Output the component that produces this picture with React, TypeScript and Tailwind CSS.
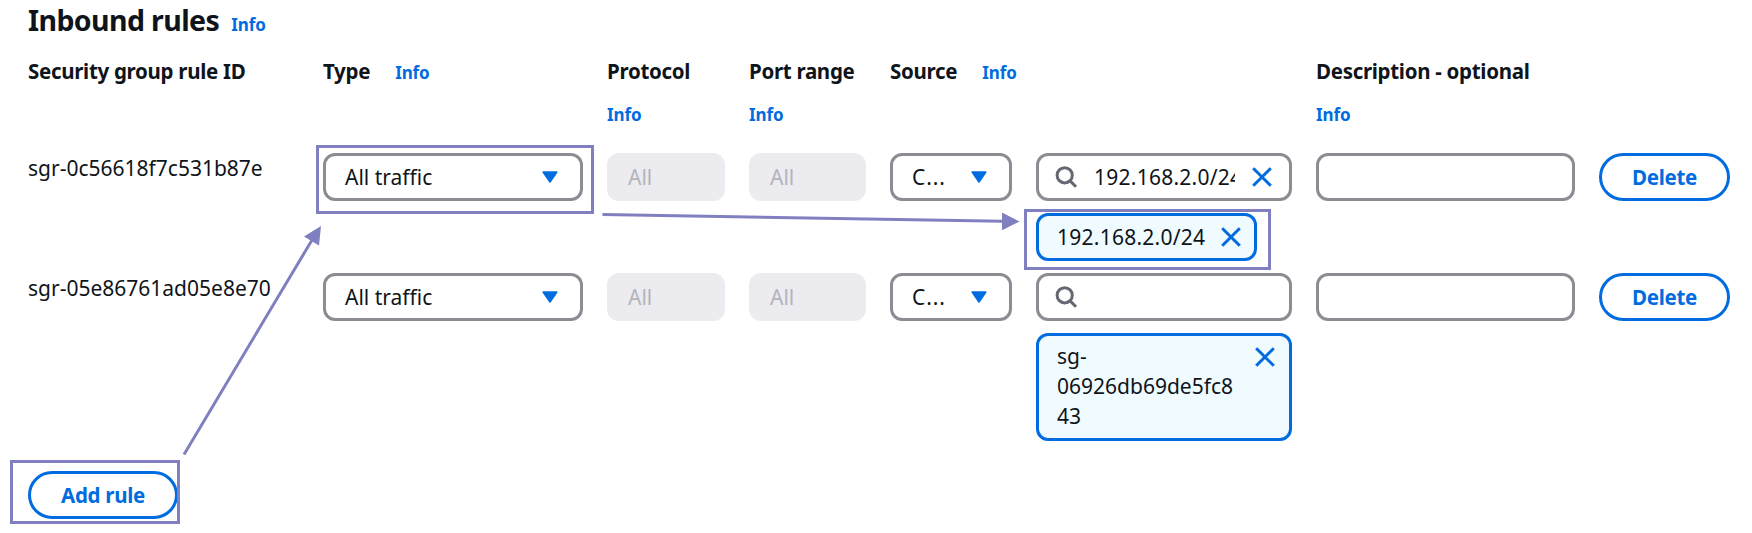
import type { ReactNode } from 'react';

const GRID =
  'grid grid-cols-[271px_260px_118px_117px_122px_256px_259px_131px] gap-x-6';

function Info({ className = '' }: { className?: string }) {
  return (
    <a className={`text-[17px] leading-[24px] font-bold tracking-[-0.1px] text-[#006ce0] ${className}`}>
      Info
    </a>
  );
}

function Caret() {
  return (
    <svg className="h-3 w-4 shrink-0" viewBox="0 0 16 12">
      <path d="M1.5 1.2h13L8 10.8z" fill="#006ce0" stroke="#006ce0" strokeWidth="2" strokeLinejoin="round" />
    </svg>
  );
}

function Close() {
  return (
    <svg className="h-5 w-5 shrink-0" viewBox="0 0 20 20">
      <path d="M1.2 1.2l17.6 17.6M18.8 1.2L1.2 18.8" stroke="#006ce0" strokeWidth="3" fill="none" />
    </svg>
  );
}

function Search() {
  return (
    <svg className="h-6 w-6 shrink-0" viewBox="0 0 24 24" fill="none" stroke="#656871" strokeWidth="3">
      <circle cx="10.7" cy="10.3" r="7.6" />
      <path d="M15.8 15.6l6.2 6.2" />
    </svg>
  );
}

function Select({ children, className = '' }: { children: ReactNode; className?: string }) {
  return (
    <div className="flex h-12 items-center justify-between rounded-xl border-3 border-[#8c8c94] pr-[22px] pl-[19px]">
      <span className={className}>{children}</span>
      <Caret />
    </div>
  );
}

function Disabled() {
  return <div className="flex h-12 items-center rounded-xl bg-[#ebebf0] pl-[21px] text-[#b4b4bb]">All</div>;
}

function SearchBox({ value }: { value?: string }) {
  return (
    <div className="flex h-12 items-center rounded-xl border-3 border-[#8c8c94] pr-[17px] pl-[15px]">
      <Search />
      <span className="ml-4 w-[141px] overflow-hidden tracking-[0.25px] whitespace-nowrap">{value}</span>
      {value && (
        <span className="ml-auto">
          <Close />
        </span>
      )}
    </div>
  );
}

function Button({ children, className = '' }: { children: ReactNode; className?: string }) {
  return (
    <button
      className={`flex h-12 items-center justify-center rounded-full border-3 border-[#006ce0] text-[20.5px] font-bold tracking-[-0.3px] text-[#006ce0] ${className}`}
    >
      {children}
    </button>
  );
}

function Rule({ id, cidr, children }: { id: string; cidr?: string; children: ReactNode }) {
  return (
    <div className={`${GRID} items-start`}>
      <div className="leading-[30px]">{id}</div>
      <Select>All traffic</Select>
      <Disabled />
      <Disabled />
      <Select className="tracking-[0.9px]">C...</Select>
      <div>
        <SearchBox value={cidr} />
        {children}
      </div>
      <div className="h-12 rounded-xl border-3 border-[#8c8c94]" />
      <Button>Delete</Button>
    </div>
  );
}

function Annotations() {
  return (
    <svg className="pointer-events-none absolute inset-0 h-[533px] w-[1752px]" viewBox="0 0 1752 533" fill="none">
      <g stroke="#8080c0" strokeWidth="3">
        <rect x="317.5" y="146.5" width="275" height="66" />
        <rect x="1025.5" y="210.5" width="244" height="58" />
        <rect x="11.5" y="461.5" width="167" height="61" />
        <path d="M184 454.500L312 240M602.500 214.500L1003 221.200" />
      </g>
      <path d="M321 226L304 236.500L319 245.500ZM1019.500 221.500L1002 212.500V230.200Z" fill="#8080c0" />
    </svg>
  );
}

export default function App() {
  return (
    <div
      className="relative h-[533px] w-[1752px] overflow-hidden bg-white pl-7 text-[21px] leading-[30px] text-[#0f141a]"
      style={{ fontFamily: '"Noto Sans", "Open Sans", sans-serif' }}
    >
      <div className="flex h-[41px] items-baseline">
        <h2 className="text-[28.5px] leading-[40px] font-bold tracking-[-0.6px]">Inbound rules</h2>
        <Info className="ml-3" />
      </div>
      <div className={`${GRID} h-[112px] pt-[15px] text-[20.5px] font-bold tracking-[-0.3px]`}>
        <div>Security group rule ID</div>
        <div>
          Type <Info className="ml-5" />
        </div>
        <div className="flex flex-col gap-[17px]">
          Protocol <Info />
        </div>
        <div className="flex flex-col gap-[17px] whitespace-nowrap">
          Port range <Info />
        </div>
        <div className="col-span-2">
          Source <Info className="ml-5" />
        </div>
        <div className="flex flex-col gap-[17px]">
          Description - optional <Info />
        </div>
      </div>
      <div className="flex flex-col gap-3">
        <Rule id="sgr-0c56618f7c531b87e" cidr="192.168.2.0/24">
          <div className="mt-3 flex h-12 w-[221px] items-center justify-between rounded-xl border-3 border-[#006ce0] bg-[#f0fbff] pr-[13px] pl-[18px]">
            <span className="tracking-[0.25px]">192.168.2.0/24</span>
            <Close />
          </div>
        </Rule>
        <Rule id="sgr-05e86761ad05e8e70">
          <div className="mt-3 flex h-[108px] items-start justify-between rounded-xl border-3 border-[#006ce0] bg-[#f0fbff] pt-[5px] pr-[14px] pl-[18px]">
            <span className="w-[180px] break-words">sg-06926db69de5fc843</span>
            <span className="pt-[6px]">
              <Close />
            </span>
          </div>
        </Rule>
      </div>
      <Button className="mt-[30px] w-[150px]">Add rule</Button>
      <Annotations />
    </div>
  );
}
